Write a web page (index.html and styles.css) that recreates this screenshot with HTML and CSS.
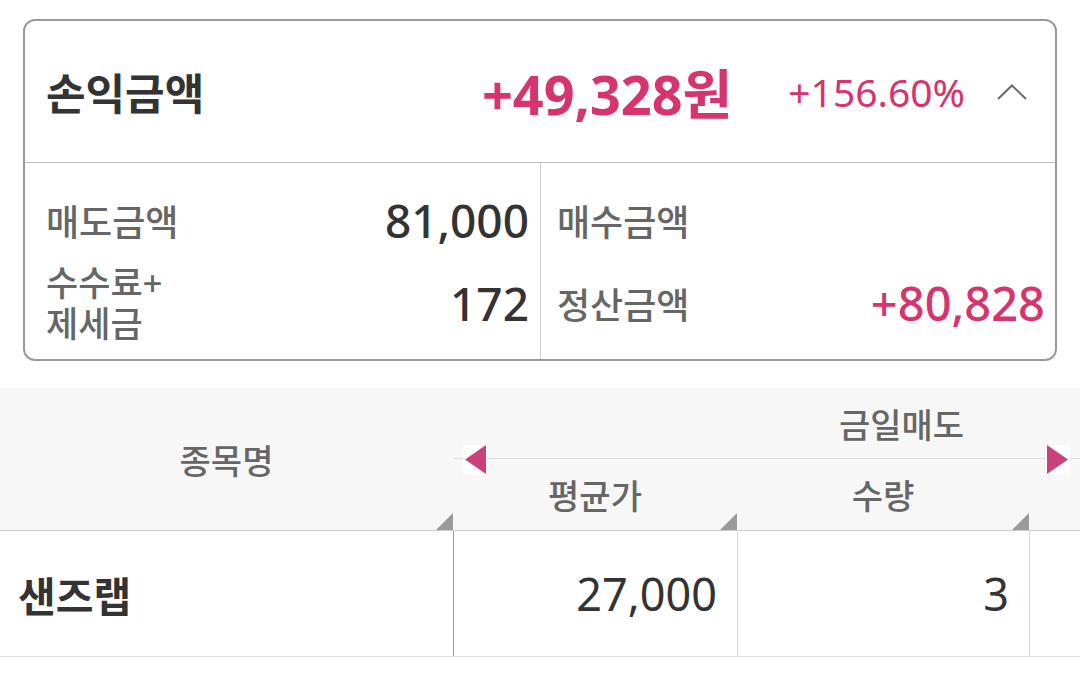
FILE: index.html
```html
<!DOCTYPE html>
<html lang="ko">
	<head>
		<meta charset="UTF-8" />
		<meta name="viewport" content="width=device-width, initial-scale=1.0" />
		<title>손익금액</title>
		<link rel="stylesheet" href="styles.css">
	</head>
	<body>
		<div class="summary">
			<div class="summary-head">
				<span class="summary-title">손익금액</span>
				<span class="profit-amount">+49,328원</span>
				<span class="profit-rate">+156.60%</span>
				<svg class="chevron" width="30" height="16" viewBox="0 0 30 16">
					<polyline points="1,15 15,1.5 29,15" fill="none" stroke="#6b6b6b" stroke-width="2" />
				</svg>
			</div>
			<div class="summary-body">
				<div class="summary-col">
					<div class="summary-row">
						<span class="label">매도금액</span>
						<span class="value">81,000</span>
					</div>
					<div class="summary-row tall">
						<div class="label small">
							<div>수수료+</div>
							<div>제세금</div>
						</div>
						<span class="value">172</span>
					</div>
				</div>
				<div class="summary-col right">
					<div class="summary-row">
						<span class="label">매수금액</span>
						<span class="value"></span>
					</div>
					<div class="summary-row tall">
						<span class="label">정산금액</span>
						<span class="value plus">+80,828</span>
					</div>
				</div>
			</div>
		</div>

		<div class="grid-wrap">
			<div class="grid">
				<div class="grid-head">
					<div class="head-cell name-head">
						종목명
						<span class="corner"></span>
					</div>
					<div class="head-group">
						<div class="group-title">금일매도</div>
						<div class="group-cols">
							<div class="head-cell">평균가<span class="corner"></span></div>
							<div class="head-cell">수량<span class="corner"></span></div>
							<div class="head-cell"><span class="corner"></span></div>
						</div>
					</div>
				</div>
				<div class="grid-row">
					<div class="cell name">샌즈랩</div>
					<div class="cell num">27,000</div>
					<div class="cell num">3</div>
					<div class="cell num"></div>
				</div>
			</div>
			<span class="arrow arrow-left"></span>
			<span class="arrow arrow-right"></span>
		</div>
	</body>
</html>
```

FILE: styles.css
```css
body {
	margin: 0;
	background: #fff;
	font-family: "Noto Sans", "Noto Sans CJK KR", sans-serif;
	color: #333;
}
.summary {
	margin: 19px 23px 0 23px;
	border: 2px solid #9a9a9a;
	border-radius: 12px;
	overflow: hidden;
}
.summary-head {
	height: 141px;
	display: flex;
	align-items: center;
	padding: 0 28px 0 21px;
	border-bottom: 1.5px solid #bdbdbd;
}
.summary-title {
	font-size: 43px;
	font-weight: 700;
	color: #333;
	flex: 1;
}
.profit-amount {
	font-size: 54px;
	font-weight: 700;
	color: #d6336f;
}
.profit-rate {
	font-size: 39px;
	color: #d6336f;
	margin-left: 56px;
}
.chevron {
	margin-left: 32px;
}
.summary-body {
	display: grid;
	grid-template-columns: 516px 1fr;
	height: 196px;
}
.summary-col {
	padding: 18px 11px 0 21px;
	border-right: 1px solid #cfcfcf;
}
.summary-col.right {
	padding: 18px 10px 0 16px;
	border-right: none;
}
.summary-row {
	height: 78px;
	display: flex;
	align-items: center;
	justify-content: space-between;
}
.summary-row.tall {
	height: 88px;
}
.label {
	font-size: 36px;
	font-weight: 500;
	color: #666;
}
.label.small {
	font-size: 35px;
	line-height: 41px;
}
.value {
	font-size: 46px;
	font-weight: 500;
	color: #333;
}
.value.plus {
	font-size: 47px;
	color: #d6336f;
}
.grid-wrap {
	position: relative;
	margin-top: 27px;
	overflow: hidden;
}
.grid {
	width: 1350px;
}
.grid-head {
	display: flex;
	height: 142px;
	background: #f7f7f7;
	border-bottom: 1px solid #cccccc;
}
.head-cell {
	position: relative;
	display: flex;
	align-items: center;
	justify-content: center;
	font-size: 34px;
	font-weight: 500;
	color: #666;
}
.name-head {
	width: 453px;
}
.head-group {
	display: flex;
	flex-direction: column;
	flex: 1;
}
.group-title {
	height: 70px;
	display: flex;
	align-items: center;
	justify-content: center;
	font-size: 34px;
	font-weight: 500;
	color: #666;
	border-bottom: 1px solid #dcdcdc;
}
.group-cols {
	display: flex;
	flex: 1;
}
.group-cols .head-cell:nth-child(1) {
	width: 284px;
}
.group-cols .head-cell:nth-child(2) {
	width: 292px;
}
.group-cols .head-cell:nth-child(3) {
	flex: 1;
}
.corner {
	position: absolute;
	right: 0;
	bottom: 0;
	width: 17px;
	height: 17px;
	background: #9a9a9a;
	clip-path: polygon(100% 0, 100% 100%, 0 100%);
}
.grid-row {
	display: flex;
	height: 125px;
	border-bottom: 1px solid #dcdcdc;
}
.cell {
	display: flex;
	align-items: center;
	font-size: 45px;
	color: #333;
	border-right: 1px solid #d6d6d6;
	box-sizing: border-box;
}
.cell.name {
	width: 454px;
	padding-left: 18px;
	font-size: 41px;
	font-weight: 700;
	border-right-color: #9a9a9a;
}
.cell.num {
	justify-content: flex-end;
	padding-right: 20px;
}
.cell.num:nth-child(2) {
	width: 284px;
}
.cell.num:nth-child(3) {
	width: 292px;
}
.cell.num:nth-child(4) {
	flex: 1;
}
.arrow {
	position: absolute;
	top: 57px;
	width: 24px;
	height: 30px;
	background: #fff;
}
.arrow::after {
	content: "";
	position: absolute;
	top: 0;
	width: 21px;
	height: 29px;
	background: #c9407a;
}
.arrow-left {
	left: 463px;
}
.arrow-left::after {
	left: 2px;
	clip-path: polygon(0 50%, 100% 0, 100% 100%);
}
.arrow-right {
	left: 1046px;
}
.arrow-right::after {
	left: 1px;
	clip-path: polygon(0 0, 100% 50%, 0 100%);
}
```
